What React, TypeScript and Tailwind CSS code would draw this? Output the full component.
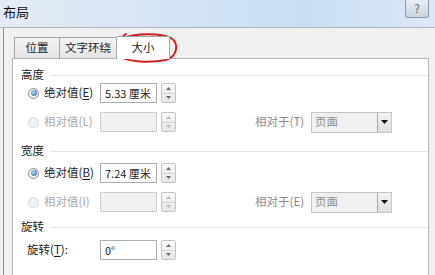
import React from "react";

const font = { fontFamily: '"Noto Sans CJK SC", "Noto Sans", sans-serif' };

function Radio({ on }: { on: boolean }) {
  return on ? (
    <div className="w-[11px] h-[11px] rounded-full border border-[#8a8f97] bg-[#f4f4f4] flex items-center justify-center">
      <div className="w-[6px] h-[6px] rounded-full bg-[radial-gradient(circle_at_40%_40%,#b7d3f0,#2a5a9a)]" />
    </div>
  ) : (
    <div className="w-[11px] h-[11px] rounded-full border border-[#d6d6d6] bg-[#f2f2f2]" />
  );
}

function Spinner({ disabled }: { disabled?: boolean }) {
  const tri = disabled ? "#b8b8b8" : "#6a6a6a";
  return (
    <div className="ml-[4px] w-[15px] h-[20px] flex flex-col border border-[#c4c4c4] rounded-[2px] bg-[linear-gradient(#fafafa,#e6e6e6)]">
      <div className="flex-1 flex items-center justify-center border-b border-[#d4d4d4]">
        <svg width="5" height="3" viewBox="0 0 5 3"><path d="M0 3 L2.5 0 L5 3 Z" fill={tri} /></svg>
      </div>
      <div className="flex-1 flex items-center justify-center">
        <svg width="5" height="3" viewBox="0 0 5 3"><path d="M0 0 L2.5 3 L5 0 Z" fill={tri} /></svg>
      </div>
    </div>
  );
}

function Input({ value, disabled }: { value?: string; disabled?: boolean }) {
  return (
    <div
      className={
        "w-[57px] h-[20px] flex items-center pl-[4px] text-[11px] whitespace-nowrap border " +
        (disabled ? "bg-[#f0f0f0] border-[#cfcfcf]" : "bg-white border-[#abadb3] text-[#222]")
      }
    >
      {value}
    </div>
  );
}

function Select() {
  return (
    <div className="ml-[8px] w-[81px] h-[21px] flex border border-[#c6c6c6] bg-[#f0f0f0]">
      <div className="flex-1 flex items-center pl-[3px] text-[11.5px] text-[#8c8c8c]">页面</div>
      <div className="w-[14px] h-full border-l border-[#a6a6a6] bg-[linear-gradient(#f4f4f4,#dedede)] flex items-center justify-center">
        <svg width="7" height="4" viewBox="0 0 7 4"><path d="M0 0 L7 0 L3.5 4 Z" fill="#111" /></svg>
      </div>
    </div>
  );
}

function SectionLabel({ text, mt }: { text: string; mt: string }) {
  return (
    <div className={"h-[16px] flex items-center pl-[8px] " + mt}>
      <span className="text-[11.5px] text-[#222] leading-none">{text}</span>
      <div className="flex-1 ml-[6px] h-px bg-[#e2e2e2]" />
    </div>
  );
}

function Key({ k, dim }: { k: string; dim?: boolean }) {
  return (
    <span>
      (<span className={dim ? "" : "underline underline-offset-2"}>{k}</span>)
    </span>
  );
}

export default function App() {
  return (
    <div className="relative w-[435px] h-[275px] overflow-hidden bg-[#f0f0f0] flex flex-col" style={font}>
      {/* title bar */}
      <div className="h-[28px] shrink-0 flex justify-between bg-[linear-gradient(90deg,#e4ebf4_0%,#d2e3f5_45%,#c9def4_70%,#dbe8f6_100%)] border-b border-[#aeb6bf]">
        <span className="pl-[3px] pt-[5px] text-[13px] text-[#111] leading-none">布局</span>
        <div className="mr-[6px] w-[24px] h-[18px] border border-t-0 border-[#8f9aa8] rounded-b-[3px] bg-[linear-gradient(#e9eef4,#c9d3de)] flex items-center justify-center text-[11px] text-[#4a5566] leading-none">
          ?
        </div>
      </div>

      {/* body */}
      <div className="flex-1 flex ml-[3px] border-l border-[#8c8c8c]">
        <div className="flex-1 flex flex-col pl-[8px] pr-[6px]">
          {/* tabs */}
          <div className="mt-[8px] h-[22px] flex items-end pl-[2px] relative z-10">
            <div className="h-[21px] w-[46px] flex items-center justify-center text-[11.5px] text-[#222] border border-b-0 border-[#a3a6ad] bg-[linear-gradient(#f4f4f4,#e4e4e4)]">位置</div>
            <div className="h-[21px] w-[57px] flex items-center justify-center text-[11.5px] text-[#222] border border-b-0 border-l-0 border-[#a3a6ad] bg-[linear-gradient(#f4f4f4,#e4e4e4)]">文字环绕</div>
            <div className="h-[23px] w-[53px] -mb-px flex items-center justify-center text-[11.5px] text-[#222] border border-b-0 border-l-0 border-[#a3a6ad] bg-white">大小</div>
          </div>
          {/* panel */}
          <div className="flex-1 bg-white border border-[#b4b4b4] border-b-0 flex flex-col">
            <SectionLabel text="高度" mt="mt-[8px]" />
            <div className="h-[20px] flex items-center">
              <div className="ml-[15px]"><Radio on /></div>
              <span className="ml-[5px] w-[56px] whitespace-nowrap text-[11.5px] text-[#222]">绝对值<Key k="E" /></span>
              <Input value="5.33 厘米" />
              <Spinner />
            </div>
            <div className="mt-[9px] h-[20px] flex items-center">
              <div className="ml-[15px]"><Radio on={false} /></div>
              <span className="ml-[5px] w-[56px] whitespace-nowrap text-[11.5px] text-[#a8a8a8]">相对值<Key k="L" dim /></span>
              <Input disabled />
              <Spinner disabled />
              <span className="ml-[79px] w-[48px] whitespace-nowrap text-[11.5px] text-[#8a8a8a]">相对于(T)</span>
              <Select />
            </div>

            <SectionLabel text="宽度" mt="mt-[11px]" />
            <div className="mt-[4px] h-[20px] flex items-center">
              <div className="ml-[15px]"><Radio on /></div>
              <span className="ml-[5px] w-[56px] whitespace-nowrap text-[11.5px] text-[#222]">绝对值<Key k="B" /></span>
              <Input value="7.24 厘米" />
              <Spinner />
            </div>
            <div className="mt-[9px] h-[20px] flex items-center">
              <div className="ml-[15px]"><Radio on={false} /></div>
              <span className="ml-[5px] w-[56px] whitespace-nowrap text-[11.5px] text-[#a8a8a8]">相对值<Key k="I" dim /></span>
              <Input disabled />
              <Spinner disabled />
              <span className="ml-[79px] w-[48px] whitespace-nowrap text-[11.5px] text-[#8a8a8a]">相对于(E)</span>
              <Select />
            </div>

            <SectionLabel text="旋转" mt="mt-[7px]" />
            <div className="mt-[5px] h-[20px] flex items-center">
              <span className="ml-[14px] w-[73px] whitespace-nowrap text-[11.5px] text-[#222]">旋转<Key k="T" />:</span>
              <Input value="0°" />
              <Spinner />
            </div>
          </div>
        </div>
      </div>

      {/* red annotation ellipse */}
      <svg className="absolute inset-0 pointer-events-none" width="435" height="275" viewBox="0 0 435 275">
        <path
          d="M124 38 C 135 33, 162 33, 171 38 C 179 43, 178 56, 166 60 C 150 63, 129 62, 121 57 C 115 52, 116 43, 122 37 L 126 34"
          fill="none"
          stroke="#d41e24"
          strokeWidth="2"
          strokeLinecap="round"
        />
      </svg>
    </div>
  );
}
